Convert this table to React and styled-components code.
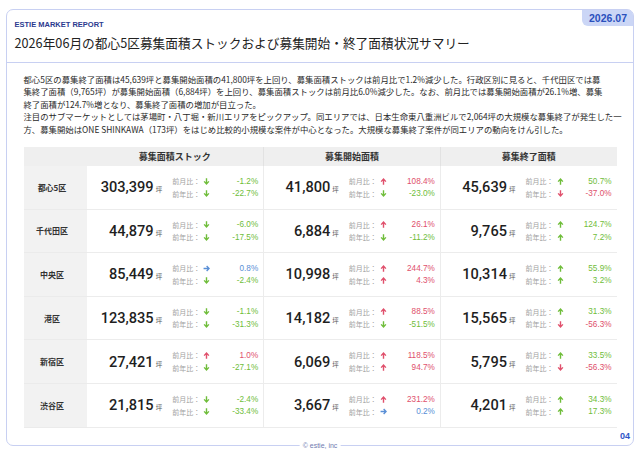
import { Fragment } from "react";
import styled, { createGlobalStyle } from "styled-components";

const GlobalStyle = createGlobalStyle`
  html, body {
    margin: 0;
    padding: 0;
    background: #ffffff;
  }
  * {
    box-sizing: border-box;
  }
`;

const JP = `"Noto Sans CJK JP", "Noto Sans", sans-serif`;
const NUM = `"Liberation Sans", "Noto Sans CJK JP", sans-serif`;

const Page = styled.div`
  width: 640px;
  height: 451px;
  padding: 9px 6px 0;
  font-family: ${JP};
  color: #333;
`;

const Frame = styled.div`
  position: relative;
  height: 437px;
  border: 1.5px solid #c8d0f2;
  border-radius: 7px;
  display: flex;
  flex-direction: column;
`;

const Header = styled.header`
  padding: 10px 10px 10.5px 7.5px;
  border-bottom: 1.5px solid #c8d0f2;
  display: flex;
  flex-direction: column;
  gap: 6px;
`;

const Kicker = styled.div`
  font-family: ${NUM};
  font-weight: 700;
  font-size: 7.5px;
  line-height: 9px;
  color: #2b3a8f;
`;

const Title = styled.h1`
  margin: 0;
  font-family: ${JP};
  font-weight: 400;
  font-size: 12.7px;
  line-height: 16px;
  color: #222;
`;

const DateBadge = styled.div`
  position: absolute;
  top: 0;
  right: 0;
  padding: 2px 6px 2px 7px;
  background: #cbd6f6;
  border-bottom-left-radius: 6px;
  border-top-right-radius: 5px;
  font-family: ${NUM};
  font-weight: 700;
  font-size: 10.5px;
  line-height: 12px;
  color: #2a50bd;
`;

const Body = styled.main`
  flex: 1;
  padding: 10px 16.5px 0;
  display: flex;
  flex-direction: column;
  gap: 12px;
`;

const Summary = styled.p`
  margin: 0;
  font-size: 8.4px;
  line-height: 12.5px;
  color: #2a2a2a;
  white-space: nowrap;
`;

const Table = styled.div`
  display: grid;
  grid-template-columns: 63px repeat(3, 1fr);
  grid-template-rows: 19px repeat(6, 43.6px);
`;

const HeadCell = styled.div`
  background: #efefef;
  display: flex;
  align-items: center;
  justify-content: center;
  font-weight: 700;
  font-size: 9px;
  color: #333;
  border-left: ${(p) => (p.$divider ? "1px solid #e2e2e2" : "none")};
`;

const DistrictCell = styled.div`
  background: #f2f2f2;
  display: flex;
  align-items: center;
  justify-content: center;
  padding-right: 6px;
  font-weight: 700;
  font-size: 8px;
  color: #333;
  border-bottom: 1px solid #ebebeb;
`;

const MetricCell = styled.div`
  display: grid;
  grid-template-columns: 1fr 86px;
  column-gap: 10px;
  align-items: center;
  padding-right: 5px;
  border-bottom: 1px solid #ececec;
  border-left: ${(p) => (p.$divider ? "1px solid #ececec" : "none")};
`;

const Amount = styled.div`
  display: flex;
  align-items: baseline;
  justify-content: flex-end;
  gap: 2px;
  font-family: Roboto, "Liberation Sans", sans-serif;
  font-weight: 500;
  font-size: 14.6px;
  color: #1f1f1f;
`;

const Unit = styled.span`
  font-family: ${JP};
  font-weight: 400;
  font-size: 6.5px;
  color: #555;
`;

const Stats = styled.div`
  display: grid;
  grid-template-columns: 31px 9px 1fr;
  grid-auto-rows: 12.5px;
  align-items: center;
`;

const StatLabel = styled.span`
  font-size: 7px;
  color: #a2a2a2;
`;

const StatValue = styled.span`
  text-align: right;
  font-family: ${NUM};
  font-size: 8.2px;
  color: ${(p) => p.$color};
`;

const Copyright = styled.div`
  position: absolute;
  left: 50%;
  bottom: -5px;
  transform: translateX(-50%);
  padding: 0 3px;
  background: #fff;
  font-family: ${NUM};
  font-size: 7px;
  line-height: 8px;
  color: #6f7bb0;
`;

const PageNo = styled.div`
  position: absolute;
  right: 3px;
  bottom: 4px;
  font-family: ${NUM};
  font-weight: 700;
  font-size: 9px;
  color: #2f56c8;
`;

const COLORS = { red: "#e0506c", green: "#6fbd3a", blue: "#5a8fd6" };

const trendOf = (v) => (Math.abs(v) < 1 ? "flat" : v > 0 ? "up" : "down");

const colorOf = (trend, inverted) => {
  if (trend === "flat") return COLORS.blue;
  if (trend === "up") return inverted ? COLORS.green : COLORS.red;
  return inverted ? COLORS.red : COLORS.green;
};

const Arrow = ({ trend, color }) => {
  const d =
    trend === "up"
      ? "M5 9.5V2 M1.6 5.2 L5 1.6 L8.4 5.2"
      : trend === "down"
      ? "M5 0.5V8 M1.6 4.8 L5 8.4 L8.4 4.8"
      : "M0.8 5H8.5 M5.2 1.6 L8.7 5 L5.2 8.4";
  return (
    <svg width="7" height="7" viewBox="0 0 10 10">
      <path d={d} fill="none" stroke={color} strokeWidth="2" />
    </svg>
  );
};

const metrics = [
  { label: "募集面積ストック", inverted: false },
  { label: "募集開始面積", inverted: false },
  { label: "募集終了面積", inverted: true },
];

const rows = [
  { name: "都心5区", cells: [["303,399", -1.2, -22.7], ["41,800", 108.4, -23.0], ["45,639", 50.7, -37.0]] },
  { name: "千代田区", cells: [["44,879", -6.0, -17.5], ["6,884", 26.1, -11.2], ["9,765", 124.7, 7.2]] },
  { name: "中央区", cells: [["85,449", 0.8, -2.4], ["10,998", 244.7, 4.3], ["10,314", 55.9, 3.2]] },
  { name: "港区", cells: [["123,835", -1.1, -31.3], ["14,182", 88.5, -51.5], ["15,565", 31.3, -56.3]] },
  { name: "新宿区", cells: [["27,421", 1.0, -27.1], ["6,069", 118.5, 94.7], ["5,795", 33.5, -56.3]] },
  { name: "渋谷区", cells: [["21,815", -2.4, -33.4], ["3,667", 231.2, 0.2], ["4,201", 34.3, 17.3]] },
];

const summaryLines = [
  "都心5区の募集終了面積は45,639坪と募集開始面積の41,800坪を上回り、募集面積ストックは前月比で1.2%減少した。行政区別に見ると、千代田区では募",
  "集終了面積（9,765坪）が募集開始面積（6,884坪）を上回り、募集面積ストックは前月比6.0%減少した。なお、前月比では募集開始面積が26.1%増、募集",
  "終了面積が124.7%増となり、募集終了面積の増加が目立った。",
  "注目のサブマーケットとしては茅場町・八丁堀・新川エリアをピックアップ。同エリアでは、日本生命東八重洲ビルで2,064坪の大規模な募集終了が発生した一",
  "方、募集開始はONE SHINKAWA（173坪）をはじめ比較的小規模な案件が中心となった。大規模な募集終了案件が同エリアの動向をけん引した。",
];

const StatLine = ({ label, value, inverted }) => {
  const trend = trendOf(value);
  const color = colorOf(trend, inverted);
  return (
    <>
      <StatLabel>{label}：</StatLabel>
      <Arrow trend={trend} color={color} />
      <StatValue $color={color}>{value.toFixed(1)}%</StatValue>
    </>
  );
};

export default function App() {
  return (
    <Page>
      <GlobalStyle />
      <Frame>
        <Header>
          <Kicker>ESTIE MARKET REPORT</Kicker>
          <Title>2026年06月の都心5区募集面積ストックおよび募集開始・終了面積状況サマリー</Title>
        </Header>
        <DateBadge>2026.07</DateBadge>

        <Body>
          <Summary>
            {summaryLines.map((line, i) => (
              <Fragment key={i}>
                {i > 0 && <br />}
                {line}
              </Fragment>
            ))}
          </Summary>

          <Table>
            <HeadCell />
            {metrics.map((m, i) => (
              <HeadCell key={m.label} $divider={i > 0}>
                {m.label}
              </HeadCell>
            ))}
            {rows.map((row) => (
              <Fragment key={row.name}>
                <DistrictCell>{row.name}</DistrictCell>
                {row.cells.map(([amount, mom, yoy], i) => (
                  <MetricCell key={i} $divider={i > 0}>
                    <Amount>
                      {amount}
                      <Unit>坪</Unit>
                    </Amount>
                    <Stats>
                      <StatLine label="前月比" value={mom} inverted={metrics[i].inverted} />
                      <StatLine label="前年比" value={yoy} inverted={metrics[i].inverted} />
                    </Stats>
                  </MetricCell>
                ))}
              </Fragment>
            ))}
          </Table>
        </Body>

        <PageNo>04</PageNo>
        <Copyright>© estie, inc</Copyright>
      </Frame>
    </Page>
  );
}
